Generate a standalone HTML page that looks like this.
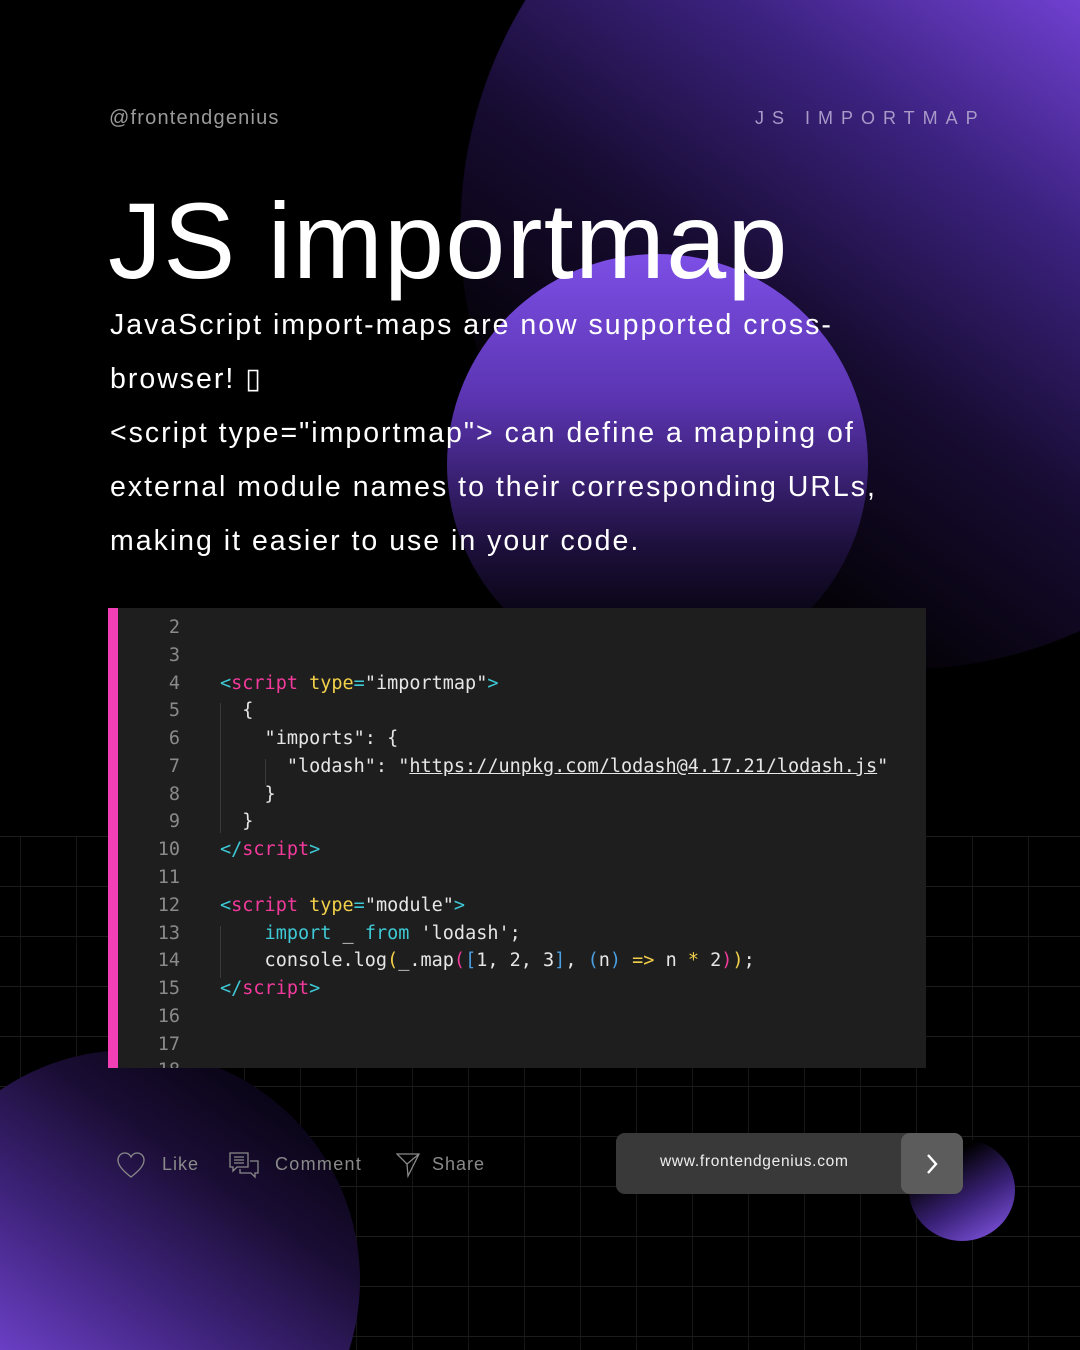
<!DOCTYPE html>
<html style="width:1080px;height:1350px;overflow:hidden"><head><meta charset="utf-8"><style>
*{margin:0;padding:0;box-sizing:border-box}
body{width:1080px;height:1350px;background:#000;overflow:hidden;font-family:"Liberation Sans",sans-serif}
#w{position:relative;width:1080px;height:1350px;overflow:hidden;background:#000}
.abs{position:absolute}
.grid{left:0;top:836px;width:1080px;height:514px;background-image:linear-gradient(#1c1c1c 1px,transparent 1px),linear-gradient(90deg,#161616 1px,transparent 1px);background-size:56px 50px;background-position:0 0,20px 0}
.c1{left:0;top:0;width:1080px;height:670px;background:radial-gradient(circle 440px at 900px 230px,transparent 439px,#000 440px),linear-gradient(215deg,#7040d0 0%,#3c2280 17%,#170c32 36%,#050208 55%,#000 70%)}
.c2{left:447px;top:254px;width:421px;height:421px;border-radius:50%;background:linear-gradient(180deg,#7d4fe6 0%,#5a34b0 35%,#1c0f3a 70%,#000 95%)}
.c3{left:0;top:1050px;width:360px;height:300px;clip-path:circle(230px at 130px 230px);background:linear-gradient(35deg,#6a3fc4 0%,#40247e 28%,#1a0d34 58%,#060310 85%)}
.c4{left:909px;top:1139px;width:106px;height:102px;border-radius:50%;background:linear-gradient(150deg,#000 25%,#3a2178 60%,#8a5cf0 100%)}
.t{color:#fff}
.code{left:108px;top:608px;width:818px;height:460px;background:#1e1e1e;border-left:10px solid #f23fb6;font-family:"DejaVu Sans Mono",monospace;font-size:18.5px;color:#e6e6e6;overflow:hidden}
.ln{position:absolute;left:0;width:62px;text-align:right;color:#8a8a8a}
.cl{position:absolute;left:102px;white-space:pre}
.p{color:#f33a9c}.y{color:#f3d04a}.cy{color:#3ec9d6}.b{color:#4a9fe0}
.code>div{margin-top:3px}
</style></head><body><div id="w">
<div class="abs grid"></div>
<div class="abs c1"></div>
<div class="abs c2"></div>
<div class="abs c3"></div>
<div class="abs c4"></div>

<div class="abs" style="left:109px;top:107px;font-size:20px;color:#9a9a9a;letter-spacing:1.2px">@frontendgenius</div>
<div class="abs" style="left:755px;top:108px;font-size:18px;color:#a99ac8;letter-spacing:8px">JS IMPORTMAP</div>
<div class="abs t" style="left:108px;top:186px;font-size:108px;letter-spacing:1.2px;line-height:110px">JS importmap</div>
<div class="abs t" style="left:110px;top:298px;font-size:28.5px;line-height:54px;letter-spacing:2px;width:900px">JavaScript import-maps are now supported cross-<br>browser! ▯<br>&lt;script type="importmap"&gt; can define a mapping of<br>external module names to their corresponding URLs,<br>making it easier to use in your code.</div>

<div class="abs code">
<div class="ln" style="top:6px">2</div>
<div class="ln" style="top:34px">3</div>
<div class="ln" style="top:62px">4</div>
<div class="ln" style="top:89px">5</div>
<div class="ln" style="top:117px">6</div>
<div class="ln" style="top:145px">7</div>
<div class="ln" style="top:173px">8</div>
<div class="ln" style="top:200px">9</div>
<div class="ln" style="top:228px">10</div>
<div class="ln" style="top:256px">11</div>
<div class="ln" style="top:284px">12</div>
<div class="ln" style="top:312px">13</div>
<div class="ln" style="top:339px">14</div>
<div class="ln" style="top:367px">15</div>
<div class="ln" style="top:395px">16</div>
<div class="ln" style="top:423px">17</div>
<div class="ln" style="top:451px;height:6px;overflow:hidden;line-height:18px">18</div>
<div class="abs" style="left:102px;top:92px;width:1px;height:130px;background:#3a3a3a"></div>
<div class="abs" style="left:147px;top:148px;width:1px;height:26px;background:#3a3a3a"></div>
<div class="abs" style="left:102px;top:315px;width:1px;height:52px;background:#3a3a3a"></div>
<div class="cl" style="top:62px"><span class="cy">&lt;</span><span class="p">script</span> <span class="y">type</span><span class="cy">=</span>"importmap"<span class="cy">&gt;</span></div>
<div class="cl" style="top:89px">  {</div>
<div class="cl" style="top:117px">    "imports": {</div>
<div class="cl" style="top:145px">      "lodash": "<span style="text-decoration:underline">https://unpkg.com/lodash@4.17.21/lodash.js</span>"</div>
<div class="cl" style="top:173px">    }</div>
<div class="cl" style="top:200px">  }</div>
<div class="cl" style="top:228px"><span class="cy">&lt;/</span><span class="p">script</span><span class="cy">&gt;</span></div>
<div class="cl" style="top:284px"><span class="cy">&lt;</span><span class="p">script</span> <span class="y">type</span><span class="cy">=</span>"module"<span class="cy">&gt;</span></div>
<div class="cl" style="top:312px">    <span class="cy">import</span> _ <span class="cy">from</span> 'lodash';</div>
<div class="cl" style="top:339px">    console.log<span class="y">(</span>_.map<span class="p">(</span><span class="b">[</span>1, 2, 3<span class="b">]</span>, <span class="b">(</span>n<span class="b">)</span> <span class="y">=&gt;</span> n <span class="y">*</span> 2<span class="p">)</span><span class="y">)</span>;</div>
<div class="cl" style="top:367px"><span class="cy">&lt;/</span><span class="p">script</span><span class="cy">&gt;</span></div>
</div>

<svg class="abs" style="left:116px;top:1151px" width="30" height="28" viewBox="0 0 30 28"><path d="M15 26C6 19 2 14 2 9 2 5 5 2 9 2c3 0 5 2 6 4 1-2 3-4 6-4 4 0 7 3 7 7 0 5-4 10-13 17z" fill="none" stroke="#8a8a8a" stroke-width="1.3"/></svg>
<div class="abs" style="left:162px;top:1154px;font-size:18px;color:#8a8a8a;letter-spacing:1px">Like</div>
<svg class="abs" style="left:228px;top:1151px" width="32" height="28" viewBox="0 0 32 28"><path d="M2 2h18v14H9l-4 4v-4H2z M6 6h10M6 9h10M6 12h10 M22 10h8v12h-3v4l-4-4H12v-4" fill="none" stroke="#8a8a8a" stroke-width="1.3"/></svg>
<div class="abs" style="left:275px;top:1154px;font-size:18px;color:#8a8a8a;letter-spacing:1.3px">Comment</div>
<svg class="abs" style="left:396px;top:1152px" width="24" height="26" viewBox="0 0 24 26"><path d="M1 2L23 2 12 24 11 12z M11 12L23 2" fill="none" stroke="#8a8a8a" stroke-width="1.3"/></svg>
<div class="abs" style="left:432px;top:1154px;font-size:18px;color:#8a8a8a;letter-spacing:1px">Share</div>

<div class="abs" style="left:616px;top:1133px;width:347px;height:61px;border-radius:9px;background:#393939"></div>
<div class="abs" style="left:660px;top:1153px;font-size:15.5px;color:#eee;letter-spacing:0.7px">www.frontendgenius.com</div>
<div class="abs" style="left:901px;top:1133px;width:62px;height:61px;border-radius:9px;background:#5c5c5c"></div>
<svg class="abs" style="left:922px;top:1151px" width="20" height="26" viewBox="0 0 20 26"><path d="M6 4l8 9-8 9" fill="none" stroke="#fff" stroke-width="2.4"/></svg>
</div></body></html>
